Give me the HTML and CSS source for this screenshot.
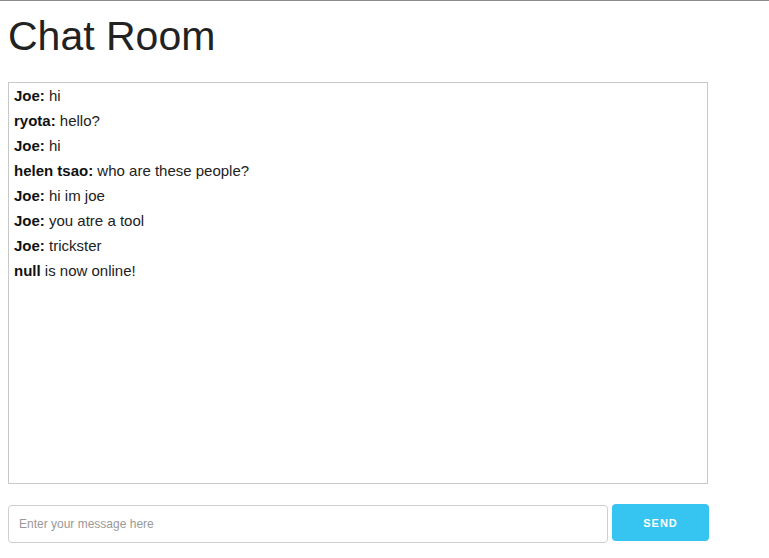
FILE: index.html
```html
<!DOCTYPE html>
<html>
<head>
<meta charset="utf-8">
<title>Chat Room</title>
<link rel="stylesheet" href="styles.css">
</head>
<body>
<div class="page">
  <h1 class="title">Chat Room</h1>
  <div class="chat-log">
    <div class="msg"><b>Joe:</b> hi</div>
    <div class="msg"><b>ryota:</b> hello?</div>
    <div class="msg"><b>Joe:</b> hi</div>
    <div class="msg"><b>helen tsao:</b> who are these people?</div>
    <div class="msg"><b>Joe:</b> hi im joe</div>
    <div class="msg"><b>Joe:</b> you atre a tool</div>
    <div class="msg"><b>Joe:</b> trickster</div>
    <div class="msg"><b>null</b> is now online!</div>
  </div>
  <form class="composer">
    <input class="message-input" type="text" placeholder="Enter your message here">
    <button class="send-btn" type="button">SEND</button>
  </form>
</div>
</body>
</html>
```

FILE: styles.css
```css
html, body {
  margin: 0;
  padding: 0;
  background: #fff;
}
body {
  border-top: 1px solid #8a8a8a;
  font-family: "Liberation Sans", Arial, Helvetica, sans-serif;
  color: #222;
}
.page {
  padding: 0 8px;
}
.title {
  margin: 12px 0 0 0;
  font-size: 41px;
  font-weight: 400;
  line-height: 46px;
  color: #222;
}
.chat-log {
  box-sizing: border-box;
  width: 700px;
  height: 402px;
  margin-top: 23px;
  border: 1px solid #c8c8c8;
  padding: 0 5px;
}
.msg {
  font-size: 15px;
  line-height: 25px;
  color: #222;
}
.msg b {
  font-weight: 700;
  color: #111;
}
.composer {
  display: flex;
  align-items: flex-start;
  gap: 4px;
  margin: 20px 0 0 0;
}
.message-input {
  box-sizing: border-box;
  width: 600px;
  height: 38px;
  margin-top: 1px;
  border: 1px solid #cfcfcf;
  border-radius: 4px;
  padding: 0 10px;
  font-family: "Liberation Sans", Arial, sans-serif;
  font-size: 12px;
  color: #333;
  outline: none;
}
.message-input::placeholder {
  color: #999;
}
.send-btn {
  box-sizing: border-box;
  width: 97px;
  height: 37px;
  border: none;
  border-radius: 4px;
  background: #36c5f0;
  color: #fff;
  font-family: "Liberation Sans", Arial, sans-serif;
  font-size: 11px;
  font-weight: 700;
  letter-spacing: 1px;
  cursor: pointer;
}
```
